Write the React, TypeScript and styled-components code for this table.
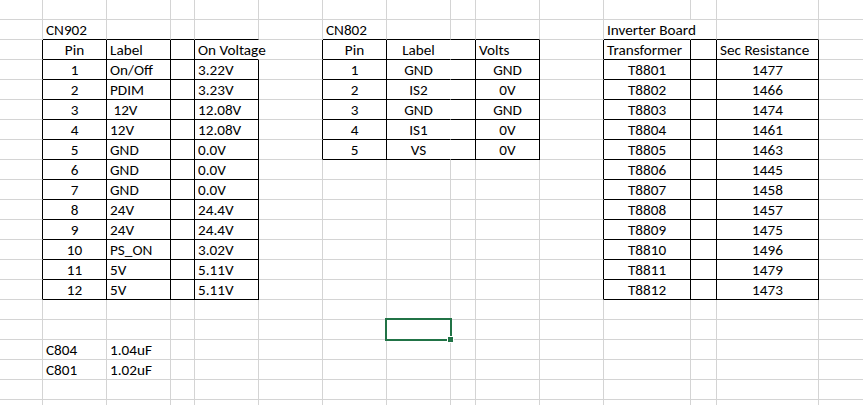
import React from "react";
import styled, { createGlobalStyle } from "styled-components";

type Align = "left" | "center";
type Line = "grid" | "black" | "none";

interface CellData {
    text?: string;
    align?: Align;
}

const colWidths = [43, 64, 64, 24, 64, 64, 64, 64, 25, 64, 64, 87, 26, 102, 64];
const rowCount = 21;

const colors = {
    grid: "#d4d4d4",
    border: "#000000",
    text: "#000000",
    select: "#217346",
};

// sheet content: [row][col]
const cells: Record<string, CellData> = {};
const put = (r: number, c: number, text: string, align: Align = "left") => {
    cells[`${r}:${c}`] = { text, align };
};

put(1, 1, "CN902");
put(1, 6, "CN802");
put(1, 11, "Inverter Board");

put(2, 1, "Pin", "center");
put(2, 2, "Label");
put(2, 4, "On Voltage");
put(2, 6, "Pin", "center");
put(2, 7, "Label", "center");
put(2, 9, "Volts");
put(2, 11, "Transformer");
put(2, 13, "Sec Resistance");

const cn902: [string, string][] = [
    ["On/Off", "3.22V"],
    ["PDIM", "3.23V"],
    ["\u00a012V", "12.08V"],
    ["12V", "12.08V"],
    ["GND", "0.0V"],
    ["GND", "0.0V"],
    ["GND", "0.0V"],
    ["24V", "24.4V"],
    ["24V", "24.4V"],
    ["PS_ON", "3.02V"],
    ["5V", "5.11V"],
    ["5V", "5.11V"],
];
cn902.forEach(([label, volts], i) => {
    put(3 + i, 1, String(i + 1), "center");
    put(3 + i, 2, label);
    put(3 + i, 4, volts);
});

const cn802: [string, string][] = [
    ["GND", "GND"],
    ["IS2", "0V"],
    ["GND", "GND"],
    ["IS1", "0V"],
    ["VS", "0V"],
];
cn802.forEach(([label, volts], i) => {
    put(3 + i, 6, String(i + 1), "center");
    put(3 + i, 7, label, "center");
    put(3 + i, 9, volts, "center");
});

const inverter = [1477, 1466, 1474, 1461, 1463, 1445, 1458, 1457, 1475, 1496, 1479, 1473];
inverter.forEach((ohms, i) => {
    put(3 + i, 11, `T88${String(i + 1).padStart(2, "0")}`, "center");
    put(3 + i, 13, String(ohms), "center");
});

put(17, 1, "C804");
put(17, 2, "1.04uF");
put(18, 1, "C801");
put(18, 2, "1.02uF");

const boxes = [
    { r0: 2, r1: 14, c0: 1, c1: 4 },
    { r0: 2, r1: 7, c0: 6, c1: 9 },
    { r0: 2, r1: 14, c0: 11, c1: 13 },
];

const inBox = (r: number, c: number) =>
    boxes.some((b) => r >= b.r0 && r <= b.r1 && c >= b.c0 && c <= b.c1);

// lines Excel hides (text spilling over, cells with fill)
const hiddenRight = (r: number, c: number) =>
    (r === 2 && c === 4) || (r >= 2 && r <= 7 && c === 7) || (r === 1 && c === 11);

const rightLine = (r: number, c: number): Line => {
    if (hiddenRight(r, c)) return "none";
    return inBox(r, c) || inBox(r, c + 1) ? "black" : "grid";
};

const bottomLine = (r: number, c: number): Line =>
    inBox(r, c) || inBox(r + 1, c) ? "black" : "grid";

const selected = { r: 16, c: 7 };

const lineColor = (l: Line) => (l === "black" ? colors.border : l === "grid" ? colors.grid : "#ffffff");

export default function App() {
    const rows = [];
    for (let r = 0; r < rowCount; r++) {
        for (let c = 0; c < colWidths.length; c++) {
            const data = cells[`${r}:${c}`];
            rows.push(
                <Cell
                    key={`${r}:${c}`}
                    $align={data?.align ?? "left"}
                    $right={rightLine(r, c)}
                    $bottom={bottomLine(r, c)}
                >
                    {data?.text}
                    {r === selected.r && c === selected.c && (
                        <Selection>
                            <FillHandle />
                        </Selection>
                    )}
                </Cell>
            );
        }
    }

    return (
        <>
            <GlobalStyle />
            <Sheet>{rows}</Sheet>
        </>
    );
}

const GlobalStyle = createGlobalStyle`
    html, body {
        margin: 0;
        padding: 0;
        background: #ffffff;
        overflow: hidden;
    }
    body {
        font-family: Carlito, Lato, "Open Sans", sans-serif;
    }
`;

const Sheet = styled.div`
    display: grid;
    grid-template-columns: ${colWidths.map((w) => `${w}px`).join(" ")};
    grid-auto-rows: 20px;
    width: 863px;
    height: 405px;
    overflow: hidden;
    background: #ffffff;
`;

const Cell = styled.div<{ $align: Align; $right: Line; $bottom: Line }>`
    position: relative;
    box-sizing: border-box;
    display: flex;
    align-items: flex-end;
    justify-content: ${(p) => (p.$align === "center" ? "center" : "flex-start")};
    padding: 0 3px 0;
    border-right: 1px solid ${(p) => lineColor(p.$right)};
    border-bottom: 1px solid ${(p) => lineColor(p.$bottom)};
    font-size: 15.2px;
    line-height: 18px;
    color: ${colors.text};
    white-space: pre;
    overflow: visible;
`;

const Selection = styled.div`
    position: absolute;
    left: -2px;
    top: -2px;
    width: 67px;
    height: 23px;
    box-sizing: border-box;
    border: 2px solid ${colors.select};
    z-index: 2;
`;

const FillHandle = styled.div`
    position: absolute;
    right: -4px;
    bottom: -4px;
    width: 7px;
    height: 7px;
    box-sizing: border-box;
    background: ${colors.select};
    border: 1px solid #ffffff;
`;
